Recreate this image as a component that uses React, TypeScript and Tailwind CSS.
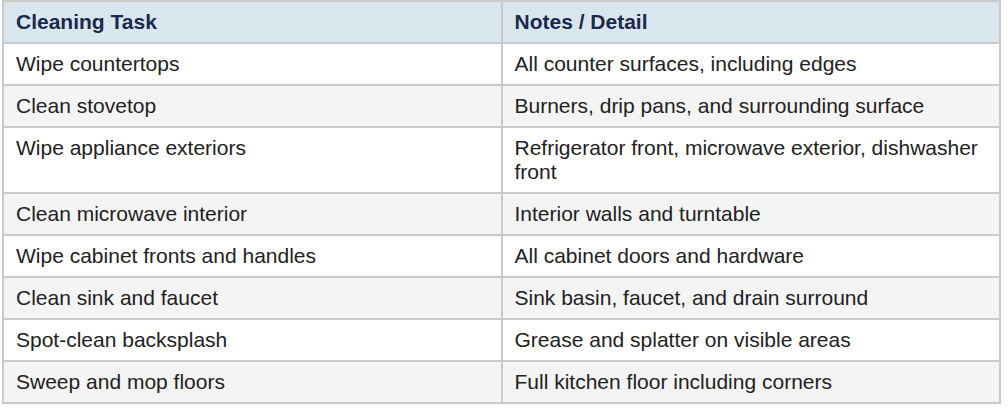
const rows: [string, string][] = [
  ['Wipe countertops', 'All counter surfaces, including edges'],
  ['Clean stovetop', 'Burners, drip pans, and surrounding surface'],
  ['Wipe appliance exteriors', 'Refrigerator front, microwave exterior, dishwasher front'],
  ['Clean microwave interior', 'Interior walls and turntable'],
  ['Wipe cabinet fronts and handles', 'All cabinet doors and hardware'],
  ['Clean sink and faucet', 'Sink basin, faucet, and drain surround'],
  ['Spot-clean backsplash', 'Grease and splatter on visible areas'],
  ['Sweep and mop floors', 'Full kitchen floor including corners'],
];

export default function App() {
  return (
    <div className="w-[1008px] h-[408px] bg-white font-['Liberation_Sans',Arial,sans-serif]">
      <table className="ml-[2px] w-[999px] table-fixed border-collapse text-[21px] leading-[24px]">
        <thead>
          <tr className="bg-[#d9e6ee]">
            <th className="border-2 border-[#cacaca] px-3 py-2 text-left font-bold text-[#1b2a4b]">
              Cleaning Task
            </th>
            <th className="border-2 border-[#cacaca] px-3 py-2 text-left font-bold text-[#1b2a4b]">
              Notes / Detail
            </th>
          </tr>
        </thead>
        <tbody>
          {rows.map(([task, note], i) => (
            <tr key={task} className={i % 2 === 0 ? 'bg-white' : 'bg-[#f4f4f4]'}>
              <td className="border-2 border-[#cacaca] px-3 py-2 align-top text-[#222222]">{task}</td>
              <td className="border-2 border-[#cacaca] px-3 py-2 align-top text-[#222222]">{note}</td>
            </tr>
          ))}
        </tbody>
      </table>
    </div>
  );
}
